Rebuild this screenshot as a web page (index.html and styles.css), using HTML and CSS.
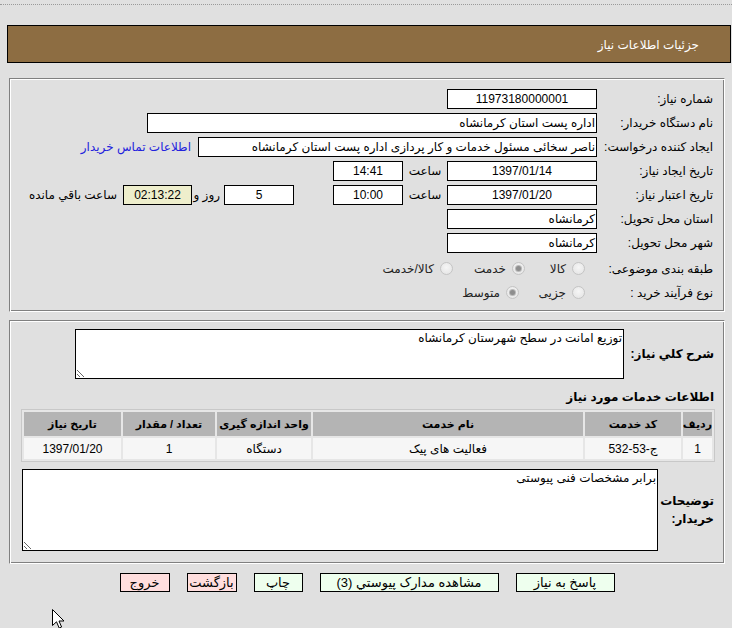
FILE: index.html
```html
<!DOCTYPE html>
<html lang="fa" dir="rtl">
<head>
<meta charset="utf-8">
<title>جزئیات اطلاعات نیاز</title>
<link rel="stylesheet" href="styles.css">
</head>
<body>
<div class="topline"></div>
<div class="header"><span class="title">جزئیات اطلاعات نیاز</span></div>

<div class="panel info">
  <div class="row"><span class="lbl">شماره نیاز:</span><span class="fld w150 center">11973180000001</span></div>
  <div class="row"><span class="lbl">نام دستگاه خریدار:</span><span class="fld w450">اداره پست استان کرمانشاه</span></div>
  <div class="row"><span class="lbl">ایجاد کننده درخواست:</span><span class="fld w399">ناصر سخائی مسئول خدمات و کار پردازی اداره پست استان کرمانشاه</span><a class="link" href="#">اطلاعات تماس خریدار</a></div>
  <div class="row"><span class="lbl">تاریخ ایجاد نیاز:</span><span class="fld w150 center">1397/01/14</span><span class="sep">ساعت</span><span class="fld w70 center">14:41</span></div>
  <div class="row"><span class="lbl">تاریخ اعتبار نیاز:</span><span class="fld w150 center">1397/01/20</span><span class="sep">ساعت</span><span class="fld w70 center">10:00</span><span class="fld w70 center days">5</span><span class="daystxt">روز و</span><span class="fld remain center">02:13:22</span><span class="remaintxt">ساعت باقي مانده</span></div>
  <div class="row"><span class="lbl">استان محل تحویل:</span><span class="fld w150">کرمانشاه</span></div>
  <div class="row"><span class="lbl">شهر محل تحویل:</span><span class="fld w150">کرمانشاه</span></div>
  <div class="row radios r8"><span class="lbl">طبقه بندی موضوعی:</span>
    <span class="opt first o60"><span class="radio"></span><span class="otext">کالا</span></span>
    <span class="opt o72"><span class="radio on"></span><span class="otext">خدمت</span></span>
    <span class="opt"><span class="radio"></span><span class="otext">کالا/خدمت</span></span>
  </div>
  <div class="row radios r9"><span class="lbl">نوع فرآیند خرید :</span>
    <span class="opt first o66"><span class="radio"></span><span class="otext">جزیی</span></span>
    <span class="opt"><span class="radio on"></span><span class="otext">متوسط</span></span>
  </div>
</div>

<div class="panel detail">
  <div class="descrow"><span class="blbl w91">شرح کلي نیاز:</span><textarea class="ta ta1" readonly>توزیع امانت در سطح شهرستان کرمانشاه</textarea></div>
  <div class="subhead">اطلاعات خدمات مورد نیاز</div>
  <table class="grid">
    <thead>
      <tr><th class="c1">ردیف</th><th class="c2">کد خدمت</th><th class="c3">نام خدمت</th><th class="c4">واحد اندازه گیری</th><th class="c5">تعداد / مقدار</th><th class="c6">تاریخ نیاز</th></tr>
    </thead>
    <tbody>
      <tr><td>1</td><td>ج-53-532</td><td>فعالیت های پیک</td><td>دستگاه</td><td>1</td><td>1397/01/20</td></tr>
    </tbody>
  </table>
  <div class="descrow notes"><span class="blbl w57">توضیحات خریدار:</span><textarea class="ta ta2" readonly>برابر مشخصات فنی پیوستی</textarea></div>
</div>

<div class="buttons">
  <button class="btn green b99">پاسخ به نیاز</button>
  <button class="btn green b179">مشاهده مدارک پیوستي (3)</button>
  <button class="btn green b49">چاپ</button>
  <button class="btn pink b50">بازگشت</button>
  <button class="btn pink b50">خروج</button>
</div>

<svg class="cursor" width="13" height="21" viewBox="0 0 13 21"><path d="M0.5 0.5 L0.5 16.5 L4.5 12.8 L7.2 19 L9.6 18 L7 12 L12 12 Z" fill="#fff" stroke="#000" stroke-width="1"/></svg>
</body>
</html>
```

FILE: styles.css
```css
* { box-sizing: border-box; }
html, body { margin: 0; padding: 0; }
body {
  background: #e0e0e0;
  font-family: "Liberation Sans", "DejaVu Sans", sans-serif;
  font-size: 12px;
  color: #000;
  position: relative;
  height: 628px;
  overflow: hidden;
}
.topline { height: 5px; border-bottom: 1px dotted #9a9a9a; }
.header {
  margin: 20px 1px 0 7px;
  height: 38px;
  background: #8d6d42;
  border: 1px solid #000;
  padding: 3px 31px 0 0;
  line-height: 33px;
  color: #fff;
}
.title { font-size: 12px; }

.panel {
  margin: 0 7px 0 9px;
  border: 1px solid;
  border-color: #808080 #fff #fff #808080;
  box-shadow: inset 1px 1px 0 #fff, inset -1px -1px 0 #808080;
}
.info { margin-top: 15px; height: 234px; padding: 8px 10px 0 0; }
.row { display: flex; align-items: center; height: 24px; white-space: nowrap; }
.lbl { width: 117px; flex: none; padding-right: 1px; }
.fld {
  flex: none;
  height: 20px;
  line-height: 18px;
  border: 1px solid #000;
  background: #fff;
  padding: 0 1px;
  overflow: hidden;
  white-space: nowrap;
}
.center { text-align: center; }
.w150 { width: 150px; }
.w450 { width: 450px; }
.w399 { width: 399px; }
.w70 { width: 70px; }
.link { color: #2222dd; text-decoration: none; margin-right: 7px; }
.sep { width: 44px; text-align: center; }
.days { margin-right: 39px; }
.daystxt { width: 32px; padding-right: 4px; }
.remain { width: 69px; background: #eeeecc; }
.remaintxt { margin-right: 6px; }

.r8 { height: 27px; }
.r9 { height: 21px; }
.opt { display: flex; align-items: center; flex: none; }
.opt.first { margin-right: 12px; }
.o60 { width: 60px; }
.o72 { width: 72px; }
.o66 { width: 66px; }
.radio {
  width: 13px; height: 13px; border-radius: 50%;
  border: 1px solid #c4c4c4;
  background: radial-gradient(circle at 50% 40%, #f6f6f6, #e2e2e2);
  position: relative;
  flex: none;
}
.radio.on::after {
  content: "";
  position: absolute;
  left: 3px; top: 3px;
  width: 5px; height: 5px;
  border-radius: 50%;
  background: #8e8e8e;
  box-shadow: 0 0 0 1px #b8b8b8;
}
.otext { margin-right: 6px; color: #222; }

.detail { margin-top: 8px; height: 244px; padding: 8px 9px 0 10px; }
.descrow { display: flex; align-items: center; }
.blbl { font-weight: bold; flex: none; padding-right: 1px; line-height: 18px; font-size: 12px; white-space: normal; }
.w91 { width: 91px; }
.w57 { width: 57px; }
.ta {
  display: block;
  border: 1px solid #000;
  background: #fff;
  font-family: "Liberation Sans", "DejaVu Sans", sans-serif;
  font-size: 12px;
  color: #000;
  padding: 1px;
  margin: 0;
  resize: both;
  outline: none;
  overflow: hidden;
}
.ta1 { width: 549px; height: 50px; }
.ta2 { width: 636px; height: 82px; }
.subhead { font-weight: bold; padding: 6px 1px 0 0; line-height: 24px; height: 30px; }
.grid {
  width: 693px;
  table-layout: fixed;
  border-collapse: separate;
  border-spacing: 2px;
  border: 1px solid #c8c8c8;
  background: #e6e6e6;
}
.grid th {
  background: #b4b4b4;
  height: 24px;
  font-weight: bold;
  font-size: 11px;
  padding: 0;
  white-space: nowrap;
  overflow: hidden;
}
.grid td {
  background: #f6f6f6;
  height: 21px;
  text-align: center;
  padding: 0;
  white-space: nowrap;
}
.c1 { width: 29px; }
.c2 { width: 96px; }
.c3 { width: 270px; }
.c4 { width: 94px; }
.c5 { width: 92px; }
.c6 { width: 97px; }
.notes { margin-top: 7px; }

.buttons { display: flex; justify-content: center; gap: 17px; margin-top: 9px; padding-left: 2px; }
.btn {
  height: 19px;
  border: 1px solid #000;
  font-family: "Liberation Sans", "DejaVu Sans", sans-serif;
  font-size: 13px;
  color: #000;
  padding: 0;
  line-height: 17px;
  overflow: hidden;
  white-space: nowrap;
}
.green { background: #eeffee; }
.pink { background: #ffdede; }
.b99 { width: 99px; }
.b179 { width: 179px; }
.b49 { width: 49px; }
.b50 { width: 50px; }
.cursor { position: absolute; left: 52px; top: 609px; }
```
